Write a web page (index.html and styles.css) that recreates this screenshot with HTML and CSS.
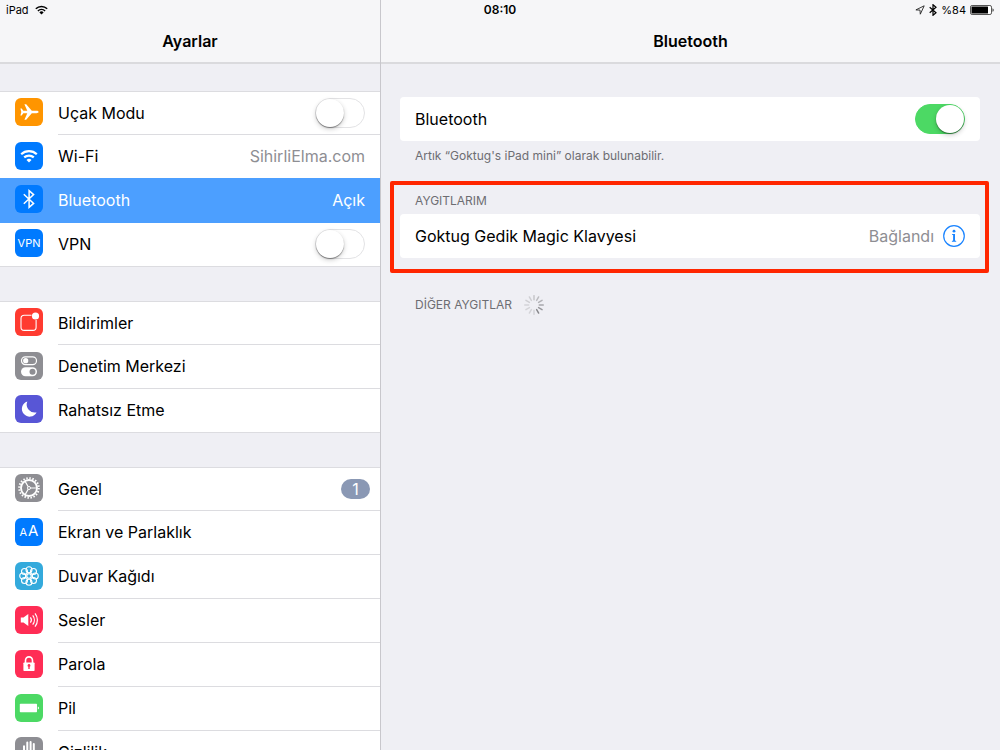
FILE: index.html
```html
<!DOCTYPE html>
<html lang="tr">
<head>
<meta charset="utf-8">
<meta name="viewport" content="width=device-width, initial-scale=1">
<title>Ayarlar</title>
<link rel="stylesheet" href="styles.css">
</head>
<body>
<div class="status">
  <div class="status-left">
    <span>iPad</span>
    <svg width="13" height="10" viewBox="0 0 13 10" aria-hidden="true"><g fill="none" stroke="#000" stroke-width="1.5"><path d="M.8 3.7a8.2 8.2 0 0 1 11.4 0"/><path d="M2.9 6a5.2 5.2 0 0 1 7.2 0"/></g><path d="M6.5 9.6 4.4 7.4a3 3 0 0 1 4.2 0z"/></svg>
  </div>
  <div class="status-time">08:10</div>
  <div class="status-right">
    <svg width="10" height="10" viewBox="0 0 10 10" aria-hidden="true"><path d="M.9 4.9 9.2.8 5.3 9.2 5 5.1z" fill="none" stroke="#222" stroke-width=".9" stroke-linejoin="round"/></svg>
    <svg width="8" height="12" viewBox="0 0 8 12" aria-hidden="true"><path d="M.7 3.3 7 8.7 4 11.3V.7l3 2.6L.7 8.7" fill="none" stroke="#000" stroke-width="1.2"/></svg>
    <span>%84</span>
    <svg width="24" height="10" viewBox="0 0 24 10" aria-hidden="true"><rect x=".5" y=".5" width="21" height="9" rx="1.6" fill="#fff" stroke="#555"/><rect x="1.5" y="1.5" width="16.5" height="7" rx=".5"/><path d="M22.6 3.2c1.3.5 1.3 3.1 0 3.6z"/></svg>
  </div>
</div>

<div class="split">
  <aside class="sidebar">
    <header class="bar"><h1>Ayarlar</h1></header>
    <nav class="menu">
      <div class="group">
        <label class="row">
          <svg class="icon orange" viewBox="0 0 28 28" aria-hidden="true"><path fill="#fff" d="M23.6 14c0-.7-.9-1.2-2.1-1.2h-4.7L11.2 6.300H9.400l2.900 6.500H8.300L6.700 10.600H5.400l.9 3.400-.9 3.400h1.300l1.600-2.200h4L9.400 21.700h1.800l5.600-6.500h4.700c1.200 0 2.100-.5 2.100-1.200z"/></svg>
          <span class="line"><span class="name">Uçak Modu</span><input class="switch" type="checkbox"></span>
        </label>
        <a class="row" href="#wifi">
          <svg class="icon blue" viewBox="0 0 28 28" aria-hidden="true"><g fill="none" stroke="#fff" stroke-width="2.200"><path d="M6.200 12.200a11.400 11.400 0 0 1 15.600 0"/><path d="M9.200 15.400a7.200 7.200 0 0 1 9.600 0"/></g><path fill="#fff" d="m14 20.600-2.500-2.600a3.600 3.600 0 0 1 5 0z"/></svg>
          <span class="line"><span class="name">Wi-Fi</span><span class="value">SihirliElma.com</span></span>
        </a>
        <a class="row selected" href="#bluetooth" aria-current="page">
          <svg class="icon blue" viewBox="0 0 28 28" aria-hidden="true"><path d="m8.800 9.300 9.800 9.100-4.500 3.900V5.700l4.500 3.900-9.800 9.100" fill="none" stroke="#fff" stroke-width="1.500"/></svg>
          <span class="line"><span class="name">Bluetooth</span><span class="value">Açık</span></span>
        </a>
        <label class="row">
          <span class="icon blue vpn" aria-hidden="true">VPN</span>
          <span class="line"><span class="name">VPN</span><input class="switch" type="checkbox"></span>
        </label>
      </div>

      <div class="group">
        <a class="row" href="#bildirimler">
          <svg class="icon red" viewBox="0 0 28 28" aria-hidden="true"><path d="M16.500 7.300H9.200a3.200 3.200 0 0 0-3.200 3.200v8.700a3.200 3.200 0 0 0 3.200 3.200h8.700a3.200 3.200 0 0 0 3.200-3.200v-7.100" fill="none" stroke="#fff" stroke-width="1.100"/><circle cx="20.500" cy="8" r="3.600" fill="#fff"/></svg>
          <span class="line"><span class="name">Bildirimler</span></span>
        </a>
        <a class="row" href="#denetim">
          <svg class="icon gray" viewBox="0 0 28 28" aria-hidden="true"><rect x="6.500" y="4.800" width="15" height="7.800" rx="3.900" fill="none" stroke="#fff" stroke-width="1.200"/><circle cx="10.700" cy="8.700" r="2.600" fill="#fff"/><rect x="6" y="15.200" width="16" height="9" rx="4.500" fill="#fff"/><circle cx="17.500" cy="19.700" r="3" fill="#8e8e93"/></svg>
          <span class="line"><span class="name">Denetim Merkezi</span></span>
        </a>
        <a class="row" href="#rahatsiz">
          <svg class="icon purple" viewBox="0 0 28 28" aria-hidden="true"><path fill="#fff" d="M12.300 6.400a8.200 8.200 0 0 0 9.300 11A7.800 7.800 0 1 1 12.300 6.400z"/></svg>
          <span class="line"><span class="name">Rahatsız Etme</span></span>
        </a>
      </div>

      <div class="group">
        <a class="row" href="#genel">
          <svg class="icon gray" viewBox="0 0 28 28" aria-hidden="true"><g fill="none" stroke="#fff"><circle cx="14" cy="14" r="9.800" stroke-width="2" stroke-dasharray="1.500 1.579"/><circle cx="14" cy="14" r="8" stroke-width="1.900"/><circle cx="14" cy="14" r="1.500" stroke-width="1"/><path d="M15.500 14H22M13.200 12.700 10 7.100M13.200 15.300 10 20.900" stroke-width="1.200"/></g></svg>
          <span class="line"><span class="name">Genel</span><span class="badge">1</span></span>
        </a>
        <a class="row" href="#ekran">
          <span class="icon blue letters" aria-hidden="true"><small>A</small>A</span>
          <span class="line"><span class="name">Ekran ve Parlaklık</span></span>
        </a>
        <a class="row" href="#duvar">
          <svg class="icon cyan" viewBox="0 0 28 28" aria-hidden="true"><g fill="none" stroke="#fff" stroke-width="1.100"><circle cx="14" cy="7.700" r="3"/><circle cx="18.500" cy="9.500" r="3"/><circle cx="20.300" cy="14" r="3"/><circle cx="18.500" cy="18.500" r="3"/><circle cx="14" cy="20.300" r="3"/><circle cx="9.500" cy="18.500" r="3"/><circle cx="7.700" cy="14" r="3"/><circle cx="9.500" cy="9.500" r="3"/><circle cx="14" cy="14" r="2.200"/><path d="M14 10.700v1.100M14 16.200v1.100M10.700 14h1.100M16.200 14h1.100M11.600 11.600l.8.800M15.600 15.600l.8.800M16.400 11.600l-.8.800M12.400 15.600l-.8.800"/></g></svg>
          <span class="line"><span class="name">Duvar Kağıdı</span></span>
        </a>
        <a class="row" href="#sesler">
          <svg class="icon pink" viewBox="0 0 28 28" aria-hidden="true"><path fill="#fff" d="M5.800 11.500h2.700l4.800-3.600v12.200l-4.800-3.600H5.800z"/><g fill="none" stroke="#fff" stroke-width="1.200"><path d="M15.400 11.300a4.500 4.500 0 0 1 0 5.400M17.700 9.300a7.500 7.500 0 0 1 0 9.400M20 7.300a10.600 10.600 0 0 1 0 13.400"/></g></svg>
          <span class="line"><span class="name">Sesler</span></span>
        </a>
        <a class="row" href="#parola">
          <svg class="icon pink" viewBox="0 0 28 28" aria-hidden="true"><path d="M10.500 13v-2.600a3.500 3.500 0 0 1 7 0V13" fill="none" stroke="#fff" stroke-width="1.600"/><rect x="8.400" y="12.400" width="11.200" height="8.600" rx=".8" fill="#fff"/><path fill="#ff2d55" d="M14 14a1.500 1.500 0 0 1 .7 2.800V19h-1.400v-2.200A1.500 1.500 0 0 1 14 14z"/></svg>
          <span class="line"><span class="name">Parola</span></span>
        </a>
        <a class="row" href="#pil">
          <svg class="icon green" viewBox="0 0 28 28" aria-hidden="true"><rect x="4.800" y="9.800" width="17.200" height="8.400" rx=".7" fill="#fff"/><path fill="#fff" d="M22.800 12.500c1.600.3 1.600 2.700 0 3z"/></svg>
          <span class="line"><span class="name">Pil</span></span>
        </a>
        <a class="row" href="#gizlilik">
          <svg class="icon gray" viewBox="0 0 28 28" aria-hidden="true"><path d="M9 16V9.300M12.300 15V5.500M15.600 15V5M18.800 15V7" fill="none" stroke="#fff" stroke-width="2" stroke-linecap="round"/><path fill="#fff" d="M8 14h11.800v2l2.200-2.300 1 .8-4.500 7.500h-7L8 18z"/></svg>
          <span class="line"><span class="name">Gizlilik</span></span>
        </a>
      </div>
    </nav>
  </aside>

  <main class="detail">
    <header class="bar"><h2>Bluetooth</h2></header>
    <div class="content">
      <label class="card">
        <span class="name">Bluetooth</span>
        <input class="switch" type="checkbox" checked>
      </label>
      <p class="note">Artık “Goktug's iPad mini” olarak bulunabilir.</p>

      <section class="devices">
        <h3 class="caption">AYGITLARIM</h3>
        <div class="card">
          <span class="name">Goktug Gedik Magic Klavyesi</span>
          <span class="value">Bağlandı</span>
          <button class="info" type="button" aria-label="Bilgi">
            <svg width="22" height="22" viewBox="0 0 22 22" aria-hidden="true"><circle cx="11" cy="11" r="10.300" fill="none" stroke="#1a84ff" stroke-width="1.200"/><circle cx="11" cy="6.200" r="1.400" fill="#1a84ff"/><path fill="#1a84ff" d="M9 9h3v6.600l1.200.3v.8H8.900v-.8l1.200-.3V10L9 9.800z"/></svg>
          </button>
        </div>
      </section>

      <section class="others">
        <h3 class="caption">DİĞER AYGITLAR</h3>
        <svg width="20" height="20" viewBox="-10 -10 20 20" aria-hidden="true"><g stroke-width="1.500" stroke-linecap="round"><path stroke="#c6c6ca" d="M0-5.300v-4"/><path stroke="#bcbcc0" d="m2.650-4.590 2-3.460"/><path stroke="#b2b2b6" d="m4.590-2.650 3.460-2"/><path stroke="#a8a8ac" d="M5.300 0h4"/><path stroke="#98989c" d="m4.590 2.650 3.460 2"/><path stroke="#88888c" d="m2.650 4.590 2 3.460"/><path stroke="#d4d4d8" d="M0 5.300v4M-2.650 4.590l-2 3.460M-4.590 2.650l-3.460 2M-5.300 0h-4"/><path stroke="#cfcfd3" d="m-4.590-2.650-3.460-2M-2.650-4.590l-2-3.460"/></g></svg>
      </section>
    </div>
  </main>
</div>
</body>
</html>
```

FILE: styles.css
```css
* {
  box-sizing: border-box;
}

body {
  margin: 0;
  background: #efeff4;
  color: #000;
  font: 16px/20px Inter, "Liberation Sans", sans-serif;
}

h1, h2, h3, p {
  margin: 0;
}

/* Status bar */
.status {
  position: absolute;
  inset: 0 0 auto;
  display: grid;
  grid-template-columns: 1fr auto 1fr;
  align-items: center;
  height: 20px;
  padding: 0 6px;
  font-size: 11px;
}

.status-left,
.status-right {
  display: flex;
  align-items: center;
  gap: 6px;
}

.status-right {
  justify-content: flex-end;
  gap: 4px;
}

.status-time {
  font-size: 12px;
  font-weight: 600;
}

/* Two panes */
.split {
  display: grid;
  grid-template-columns: 38% 1fr;
  height: 100vh;
}

.sidebar,
.detail {
  display: flex;
  flex-direction: column;
  min-width: 0;
  min-height: 0;
}

.detail {
  border-left: 1px solid #c8c7cc;
}

.bar {
  flex: none;
  height: 64px;
  padding-top: 31px;
  border-bottom: 2px solid #dadadd;
  background: #f6f6f8;
  text-align: center;
}

.bar h1,
.bar h2 {
  font-size: 16px;
  font-weight: 600;
}

/* Sidebar */
.menu {
  display: flex;
  flex-direction: column;
  gap: 34px;
  min-height: 0;
  padding-top: 27px;
  overflow: hidden;
}

.group {
  flex: none;
  display: flex;
  flex-direction: column;
  background: #fff;
  border-top: 1px solid #dcdce0;
  border-bottom: 1px solid #dcdce0;
}

.row {
  display: flex;
  align-items: center;
  gap: 15px;
  height: 44px;
  padding-left: 15px;
  color: inherit;
  text-decoration: none;
}

.row:first-child,
.row:last-child {
  height: 43px;
}

.line {
  flex: 1;
  display: flex;
  align-items: center;
  align-self: stretch;
  padding: 0 15px 1px 0;
  border-bottom: 1px solid #dcdce0;
}

.row:last-child .line {
  border-bottom: 0;
}

.name {
  flex: 1;
}

.value {
  color: #8e8e93;
}

.selected,
.selected .value {
  color: #fff;
}

/* Covers the separator of the row above */
.row.selected {
  height: 45px;
  margin-top: -1px;
  background: #4c9fff;
}

.selected .line {
  border-color: #4c9fff;
}

.icon {
  flex: none;
  width: 28px;
  height: 28px;
  margin-bottom: 3px;
  border-radius: 6px;
}

.orange { background: #ff9500; }
.blue { background: #007aff; }
.red { background: #ff3b30; }
.gray { background: #8e8e93; }
.purple { background: #5856d6; }
.cyan { background: #34aadc; }
.pink { background: #ff2d55; }
.green { background: #4cd964; }

.vpn,
.letters {
  display: flex;
  align-items: center;
  justify-content: center;
  color: #fff;
  font-size: 11px;
}

.letters {
  align-items: baseline;
  gap: 1px;
  font-size: 15px;
  line-height: 26px;
}

.letters small {
  font-size: 11px;
}

.badge {
  width: 29px;
  margin-right: -5px;
  border-radius: 10px;
  background: #8a98b4;
  color: #fff;
  text-align: center;
}

.switch {
  appearance: none;
  flex: none;
  display: flex;
  width: 50px;
  height: 30px;
  margin: 0;
  border: 1px solid #e3e3e5;
  border-radius: 15px;
  background: #fff;
}

.switch::before {
  content: "";
  width: 28px;
  height: 28px;
  border-radius: 50%;
  background: #fff;
  box-shadow: 0 1px 1px #0006, 0 2px 5px #0003;
}

.switch:checked {
  justify-content: flex-end;
  border-color: #4cd964;
  background: #4cd964;
}

/* Detail pane */
.content {
  padding: 33px 20px 0 19px;
}

.card {
  display: flex;
  align-items: center;
  height: 44px;
  padding: 0 15px;
  border-radius: 4px;
  background: #fff;
}

.note,
.caption {
  color: #6d6d72;
  font-size: 12px;
  font-weight: 400;
}

.note {
  padding: 5px 15px 0;
}

.devices {
  margin: 15px -9px 0 -10px;
  padding: 6px 5px 11px 6px;
  border: 4px solid #ff2600;
  border-radius: 2px;
}

.devices .caption {
  padding: 0 15px 3px;
}

.info {
  display: flex;
  margin-left: 9px;
  padding: 0;
  border: 0;
  background: none;
}

.others {
  display: flex;
  align-items: center;
  gap: 12px;
  padding: 22px 15px 0;
}
```
